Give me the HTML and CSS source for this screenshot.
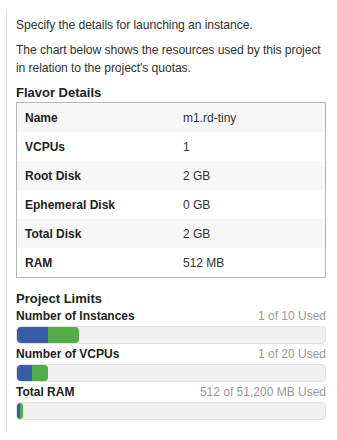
FILE: index.html
```html
<!DOCTYPE html>
<html lang="en">
<head>
  <meta charset="UTF-8" />
  <title>Launch Instance - Details</title>
  <link rel="stylesheet" href="styles.css">
</head>
<body>

  <div class="help-panel">
    <p>Specify the details for launching an instance.</p>
    <p>The chart below shows the resources used by this project in relation to the project's quotas.</p>

    <h4>Flavor Details</h4>
    <table class="flavor-table">
      <tr><td class="label">Name</td><td>m1.rd-tiny</td></tr>
      <tr><td class="label">VCPUs</td><td>1</td></tr>
      <tr><td class="label">Root Disk</td><td>2 GB</td></tr>
      <tr><td class="label">Ephemeral Disk</td><td>0 GB</td></tr>
      <tr><td class="label">Total Disk</td><td>2 GB</td></tr>
      <tr><td class="label">RAM</td><td>512 MB</td></tr>
    </table>

    <h4 class="limits-title">Project Limits</h4>

    <div class="quota">
      <div class="quota-head">
        <strong>Number of Instances</strong>
        <span class="used">1 of 10 Used</span>
      </div>
      <div class="bar">
        <div class="bar-used" style="width: 10%"></div>
        <div class="bar-added" style="width: 10%"></div>
      </div>
    </div>

    <div class="quota">
      <div class="quota-head">
        <strong>Number of VCPUs</strong>
        <span class="used">1 of 20 Used</span>
      </div>
      <div class="bar">
        <div class="bar-used" style="width: 5%"></div>
        <div class="bar-added" style="width: 5%"></div>
      </div>
    </div>

    <div class="quota">
      <div class="quota-head">
        <strong>Total RAM</strong>
        <span class="used">512 of 51,200 MB Used</span>
      </div>
      <div class="bar">
        <div class="bar-used" style="width: 1%"></div>
        <div class="bar-added" style="width: 1%"></div>
      </div>
    </div>
  </div>

</body>
</html>
```

FILE: styles.css
```css
body {
  font-family: 'Liberation Sans', Arial, sans-serif;
  font-size: 12px;
  margin: 0;
  background-color: #fff;
  color: #333;
}

.help-panel {
  margin: 9px 0 0 6px;
  padding: 7px 10px 10px 9px;
  border-left: 1px solid #e3e3e3;
  width: 310px;
}

.help-panel p {
  margin: 0 -4px 7px 0;
  font-size: 12.2px;
  letter-spacing: -0.1px;
  line-height: 18px;
}

.help-panel h4 {
  margin: 6px 0 0;
  font-size: 13px;
  line-height: 18px;
  color: #222;
}

.flavor-table {
  width: 100%;
  border-collapse: collapse;
  border: 1px solid #b8b8b8;
}

.flavor-table td {
  height: 29px;
  padding: 0 8px;
  line-height: 16px;
  color: #333;
}

.flavor-table tr:nth-child(odd) {
  background-color: #f7f7f7;
}

.flavor-table .label {
  width: 142px;
  font-weight: bold;
  color: #222;
}

.help-panel .limits-title {
  margin-top: 12px;
}

.quota {
  margin-bottom: 2px;
}

.quota-head {
  display: flex;
  justify-content: space-between;
  line-height: 17px;
}

.quota-head strong {
  color: #222;
}

.used {
  color: #999;
}

.bar {
  display: flex;
  height: 16px;
  margin-top: 1px;
  background-color: #f0f0f0;
  border: 1px solid #e2e2e2;
  border-radius: 4px;
  overflow: hidden;
}

.bar-used {
  background-color: #3a5da9;
  border-radius: 4px 0 0 4px;
}

.bar-added {
  background-color: #52ad47;
  border-radius: 0 4px 4px 0;
}
```
